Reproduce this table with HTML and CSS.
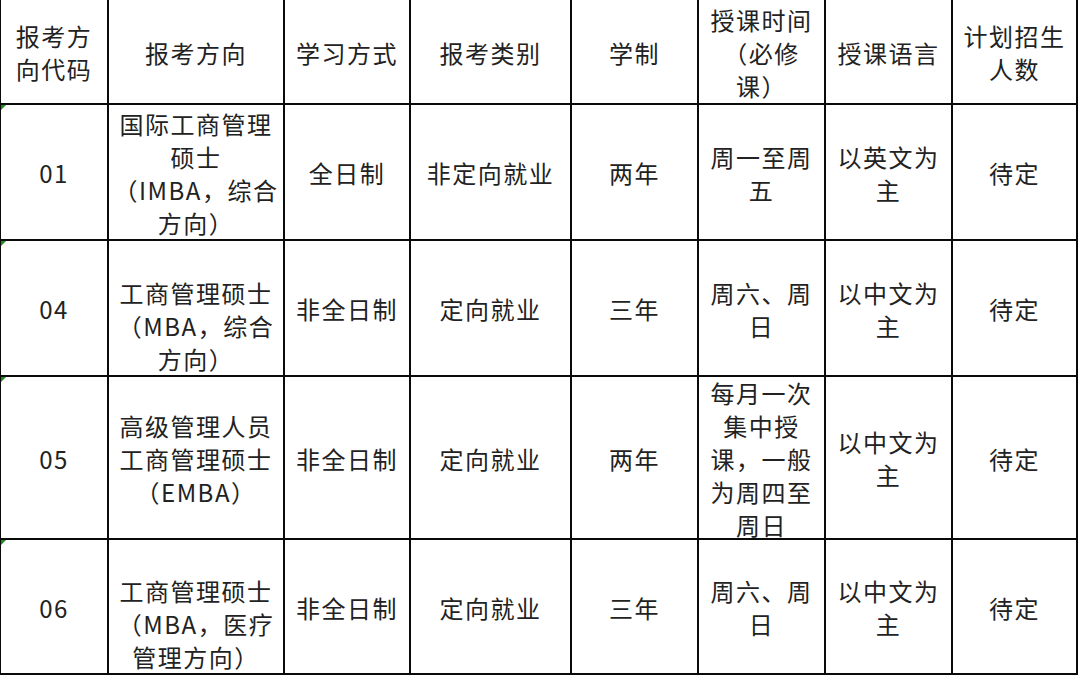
FILE: index.html
```html
<!DOCTYPE html>
<html lang="zh-CN">
<head>
<meta charset="utf-8">
<title>招生计划</title>
<link rel="stylesheet" href="styles.css">
</head>
<body>
<div class="sheet">
  <div class="cell">报考方<br>向代码</div>
  <div class="cell">报考方向</div>
  <div class="cell">学习方式</div>
  <div class="cell">报考类别</div>
  <div class="cell">学制</div>
  <div class="cell">授课时间<br>（必修<br>课）</div>
  <div class="cell">授课语言</div>
  <div class="cell">计划招生<br>人数</div>

  <div class="cell code">01</div>
  <div class="cell">国际工商管理<br>硕士<br>（IMBA，综合<br>方向）</div>
  <div class="cell">全日制</div>
  <div class="cell">非定向就业</div>
  <div class="cell">两年</div>
  <div class="cell">周一至周<br>五</div>
  <div class="cell">以英文为<br>主</div>
  <div class="cell">待定</div>

  <div class="cell code">04</div>
  <div class="cell"><br>工商管理硕士<br>（MBA，综合<br>方向）</div>
  <div class="cell">非全日制</div>
  <div class="cell">定向就业</div>
  <div class="cell">三年</div>
  <div class="cell">周六、周<br>日</div>
  <div class="cell">以中文为<br>主</div>
  <div class="cell">待定</div>

  <div class="cell code">05</div>
  <div class="cell">高级管理人员<br>工商管理硕士<br>（EMBA）</div>
  <div class="cell">非全日制</div>
  <div class="cell">定向就业</div>
  <div class="cell">两年</div>
  <div class="cell">每月一次<br>集中授<br>课，一般<br>为周四至<br>周日</div>
  <div class="cell">以中文为<br>主</div>
  <div class="cell">待定</div>

  <div class="cell code">06</div>
  <div class="cell"><br>工商管理硕士<br>（MBA，医疗<br>管理方向）</div>
  <div class="cell">非全日制</div>
  <div class="cell">定向就业</div>
  <div class="cell">三年</div>
  <div class="cell">周六、周<br>日</div>
  <div class="cell">以中文为<br>主</div>
  <div class="cell">待定</div>
</div>
</body>
</html>
```
FILE: styles.css
```css
html, body {
  margin: 0;
  padding: 0;
  background: #ffffff;
  overflow: hidden;
}

.sheet {
  display: grid;
  grid-template-columns: 106px 174px 124px 159px 125px 125px 125px 123px;
  grid-template-rows: 103px 134px 134px 161px 133px;
  gap: 2px;
  padding: 2px;
  background: #0a0a0a;
  width: max-content;
  margin: -2px 0 0 -1px;
}

.cell {
  position: relative;
  background: #ffffff;
  display: flex;
  align-items: center;
  justify-content: center;
  text-align: center;
  box-sizing: border-box;
  padding-top: 1px;
  font-family: "Noto Sans CJK SC", "Noto Sans", sans-serif;
  font-size: 24px;
  line-height: 33px;
  letter-spacing: 1.5px;
  color: #222222;
}

.code::before {
  content: "";
  position: absolute;
  left: 0;
  top: 0;
  width: 0;
  height: 0;
  border-top: 5px solid #1f8a1f;
  border-right: 5px solid transparent;
}
```
